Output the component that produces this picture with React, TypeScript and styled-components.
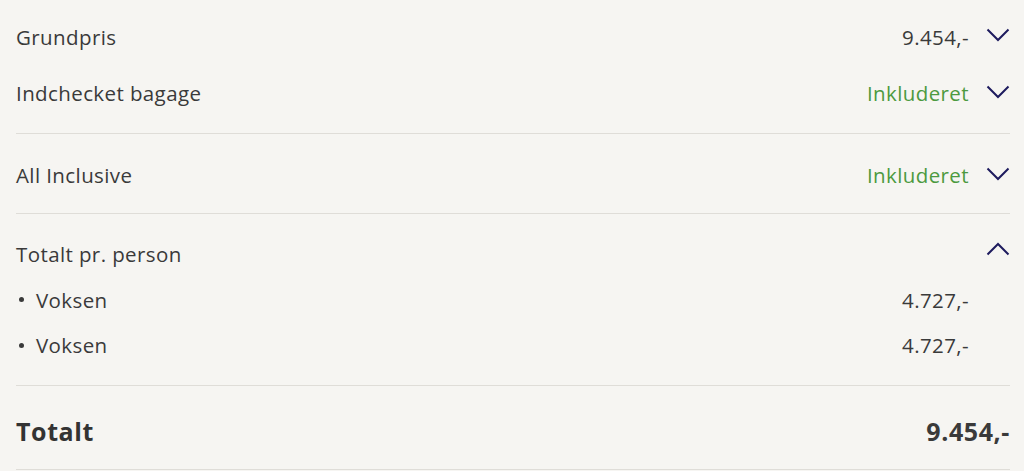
import { createGlobalStyle } from 'styled-components'
import styled from 'styled-components'

const GlobalStyle = createGlobalStyle`
  html, body {
    margin: 0;
    padding: 0;
    background: #f6f5f2;
  }
  body {
    font-family: "Open Sans", "Liberation Sans", sans-serif;
    color: #3a3a3a;
  }
`

const Summary = styled.section`
  padding: 0 14px 0 16px;
`

const Group = styled.div<{ $pt: number; $pb: number; $gap?: number }>`
  display: flex;
  flex-direction: column;
  gap: ${p => p.$gap ?? 20}px;
  padding-top: ${p => p.$pt}px;
  padding-bottom: ${p => p.$pb}px;
  border-bottom: 1px solid #dfddd8;
`

const Row = styled.div`
  display: flex;
  align-items: center;
  height: 36px;
  font-size: 20.5px;
  letter-spacing: 0.4px;
`

const Label = styled.span`
  flex: 1;
`

const Value = styled.span<{ $green?: boolean }>`
  color: ${p => (p.$green ? '#4c9a3f' : '#3a3a3a')};
`

const ChevronSlot = styled.span<{ $lift?: number }>`
  width: 41px;
  display: flex;
  justify-content: flex-end;
  align-items: center;
  margin-bottom: ${p => (p.$lift ?? 0) * 2}px;
`

const SubRow = styled(Row)`
  padding-left: 3px;
`

const Bullet = styled.span`
  width: 5px;
  height: 5px;
  border-radius: 50%;
  background: #3a3a3a;
  margin-right: 12px;
`

const TotalRow = styled(Row)`
  font-size: 25px;
  font-weight: 700;
  letter-spacing: 0.6px;
  color: #333;
`

const Chevron = ({ up }: { up?: boolean }) => (
  <svg width="24" height="14" viewBox="0 0 24 14" fill="none">
    <path
      d={up ? 'M1.5 12.5 L12 2 L22.5 12.5' : 'M1.5 1.5 L12 12 L22.5 1.5'}
      stroke="#1e1b5e"
      strokeWidth="2"
    />
  </svg>
)

const App = () => {
  return (
    <>
      <GlobalStyle />
      <Summary>
        <Group $pt={19} $pb={22}>
          <Row>
            <Label>Grundpris</Label>
            <Value>9.454,-</Value>
            <ChevronSlot $lift={2}><Chevron /></ChevronSlot>
          </Row>
          <Row>
            <Label>Indchecket bagage</Label>
            <Value $green>Inkluderet</Value>
            <ChevronSlot $lift={1}><Chevron /></ChevronSlot>
          </Row>
        </Group>
        <Group $pt={23} $pb={20}>
          <Row>
            <Label>All Inclusive</Label>
            <Value $green>Inkluderet</Value>
            <ChevronSlot $lift={1}><Chevron /></ChevronSlot>
          </Row>
        </Group>
        <Group $pt={22} $pb={22} $gap={9.5}>
          <Row>
            <Label>Totalt pr. person</Label>
            <ChevronSlot $lift={5}><Chevron up /></ChevronSlot>
          </Row>
          <SubRow>
            <Bullet />
            <Label>Voksen</Label>
            <Value>4.727,-</Value>
            <ChevronSlot />
          </SubRow>
          <SubRow>
            <Bullet />
            <Label>Voksen</Label>
            <Value>4.727,-</Value>
            <ChevronSlot />
          </SubRow>
        </Group>
        <Group $pt={27} $pb={20}>
          <TotalRow>
            <Label>Totalt</Label>
            <Value>9.454,-</Value>
          </TotalRow>
        </Group>
      </Summary>
    </>
  )
}

export default App
